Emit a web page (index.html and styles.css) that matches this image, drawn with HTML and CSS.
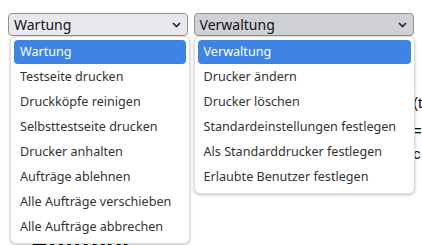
FILE: index.html
```html
<!DOCTYPE html>
<html lang="de">
<head>
  <meta charset="UTF-8">
  <meta name="viewport" content="width=device-width, initial-scale=1.0">
  <title>Drucker</title>
  <link rel="stylesheet" href="styles.css">
</head>
<body>
  <div class="page">
    <div class="toolbar">
      <div class="select-wrap first">
        <div class="select">
          <span>Wartung</span>
          <svg class="chevron" width="9" height="6" viewBox="0 0 9 6"><path d="M1 1l3.5 3.5L8 1" fill="none" stroke="#222" stroke-width="1.6"/></svg>
        </div>
        <ul class="menu">
          <li class="active">Wartung</li>
          <li>Testseite drucken</li>
          <li>Druckköpfe reinigen</li>
          <li>Selbsttestseite drucken</li>
          <li>Drucker anhalten</li>
          <li>Aufträge ablehnen</li>
          <li>Alle Aufträge verschieben</li>
          <li>Alle Aufträge abbrechen</li>
        </ul>
      </div>
      <div class="select-wrap second">
        <div class="select open">
          <span>Verwaltung</span>
          <svg class="chevron" width="9" height="6" viewBox="0 0 9 6"><path d="M1 1l3.5 3.5L8 1" fill="none" stroke="#222" stroke-width="1.6"/></svg>
        </div>
        <ul class="menu">
          <li class="active">Verwaltung</li>
          <li>Drucker ändern</li>
          <li>Drucker löschen</li>
          <li>Standardeinstellungen festlegen</li>
          <li>Als Standarddrucker festlegen</li>
          <li>Erlaubte Benutzer festlegen</li>
        </ul>
      </div>
    </div>

    <div class="details">
      <div class="spacer"></div>
      <div class="info">
        <p class="line one">(t</p>
        <p class="line two">=</p>
        <p class="line three">c</p>
      </div>
    </div>

    <h2 class="section">Aufträge</h2>
  </div>
</body>
</html>
```

FILE: styles.css
```css
html, body {
  margin: 0;
  background: #ffffff;
  overflow: hidden;
}

.page {
  padding: 13px 8px 0 8px;
  font-family: "Liberation Sans", Arial, sans-serif;
  color: #000;
}

.toolbar {
  display: flex;
  gap: 6px;
  height: 23px;
}

.select-wrap {
  position: relative;
}

.select-wrap.first {
  width: 180px;
}

.select-wrap.second {
  width: 221px;
}

.select {
  box-sizing: border-box;
  height: 23px;
  display: flex;
  align-items: center;
  justify-content: space-between;
  padding: 0 6px 0 5px;
  background: #e9e9ed;
  border: 1px solid #8f8f9d;
  border-radius: 4px;
  font-family: "Noto Sans", sans-serif;
  font-size: 14px;
  color: #111;
}

.select.open {
  background: #d0d0d7;
}

.chevron {
  margin-top: 1px;
}

.menu {
  position: absolute;
  top: 23px;
  list-style: none;
  margin: 0;
  padding: 3px;
  background: #ffffff;
  border: 1px solid #dcdcdc;
  border-radius: 6px;
  box-shadow: 0 1px 3px rgba(0, 0, 0, 0.25);
  font-family: "Noto Sans", sans-serif;
  font-size: 12.6px;
  color: #333333;
  z-index: 2;
}

.first .menu {
  left: 2px;
  width: 172px;
}

.second .menu {
  left: 0;
  width: 213px;
}

.menu li {
  height: 25px;
  line-height: 24px;
  padding: 0 6px;
  border-radius: 4px;
}

.menu li.active {
  height: 24px;
  margin-bottom: 1px;
  background: #3d84e5;
  color: #ffffff;
}

.details {
  display: flex;
}

.spacer {
  width: 405px;
  flex-shrink: 0;
}

.info {
  white-space: nowrap;
  font-size: 15px;
}

.line {
  margin: 0;
}

.line.one {
  margin-top: 58px;
}

.line.two {
  margin-top: 11px;
}

.line.three {
  margin-top: 6px;
}

.section {
  margin: 64px 0 0 22px;
  font-size: 26px;
  font-weight: bold;
}
```
